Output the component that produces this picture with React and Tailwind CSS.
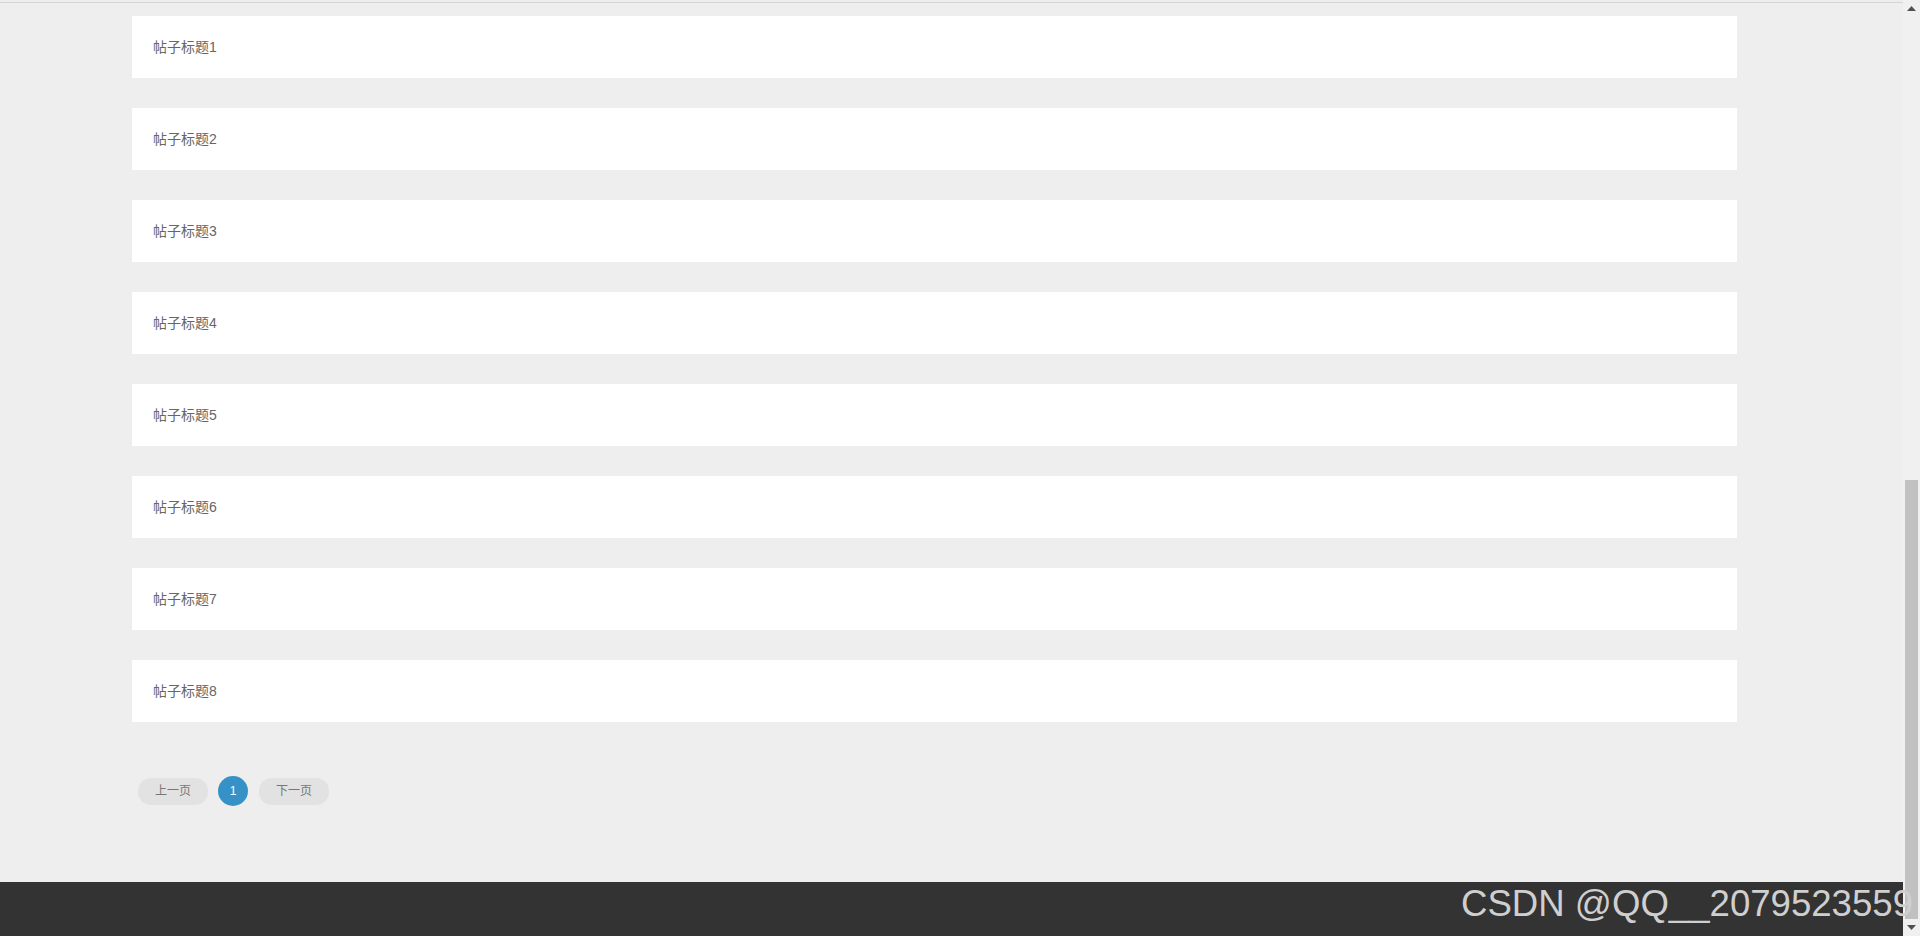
import React from 'react';

const posts = ['帖子标题1', '帖子标题2', '帖子标题3', '帖子标题4', '帖子标题5', '帖子标题6', '帖子标题7', '帖子标题8'];

const font = { fontFamily: '"Liberation Sans", "Noto Sans CJK SC", sans-serif' };

const App = () => {
  return (
    <div className="relative flex h-[936px] w-[1920px] overflow-hidden" style={font}>
      {/* page */}
      <div className="flex flex-1 flex-col bg-[#eeeeee]">
        <div className="h-[2px] bg-[#eceeed]" />
        <div className="h-px bg-[#d3d6d5]" />

        <main className="flex-1">
          <ul className="ml-[132px] mt-[13px] flex w-[1605px] flex-col gap-[30px]">
            {posts.map(title => (
              <li key={title} className="flex h-[62px] items-center bg-white pl-[21px] text-[14px] text-[#666666]">
                {title}
              </li>
            ))}
          </ul>

          {/* pagination */}
          <div className="ml-[138px] mt-[54px] flex items-center gap-[10px]">
            <button className="h-[27px] w-[70px] rounded-[13px] bg-[#e2e2e2] text-[12px] text-[#777777]">上一页</button>
            <span className="flex h-[30px] w-[30px] items-center justify-center rounded-full bg-[#3692c6] text-[12px] text-white">1</span>
            <button className="ml-px h-[27px] w-[70px] rounded-[13px] bg-[#e2e2e2] text-[12px] text-[#777777]">下一页</button>
          </div>
        </main>

        <footer className="h-[54px] bg-[#333333]" />
      </div>

      {/* scrollbar */}
      <div className="flex w-[17px] flex-col bg-[#f0f0f0]">
        <div className="flex h-[17px] items-center justify-center">
          <svg width="9" height="5" viewBox="0 0 9 5"><path d="M4.5 0L9 5H0z" fill="#505050" /></svg>
        </div>
        <div className="flex-1 px-[2px] pt-[463px]">
          <div className="h-full bg-[#c1c1c1]" />
        </div>
        <div className="flex h-[17px] items-center justify-center">
          <svg width="9" height="5" viewBox="0 0 9 5"><path d="M0 0H9L4.5 5z" fill="#505050" /></svg>
        </div>
      </div>

      {/* watermark */}
      <div className="pointer-events-none absolute bottom-[13px] right-[7px] text-[36.6px] leading-none text-[#cfcfcf]">
        CSDN @QQ__2079523559
      </div>
    </div>
  );
};

export default App;
